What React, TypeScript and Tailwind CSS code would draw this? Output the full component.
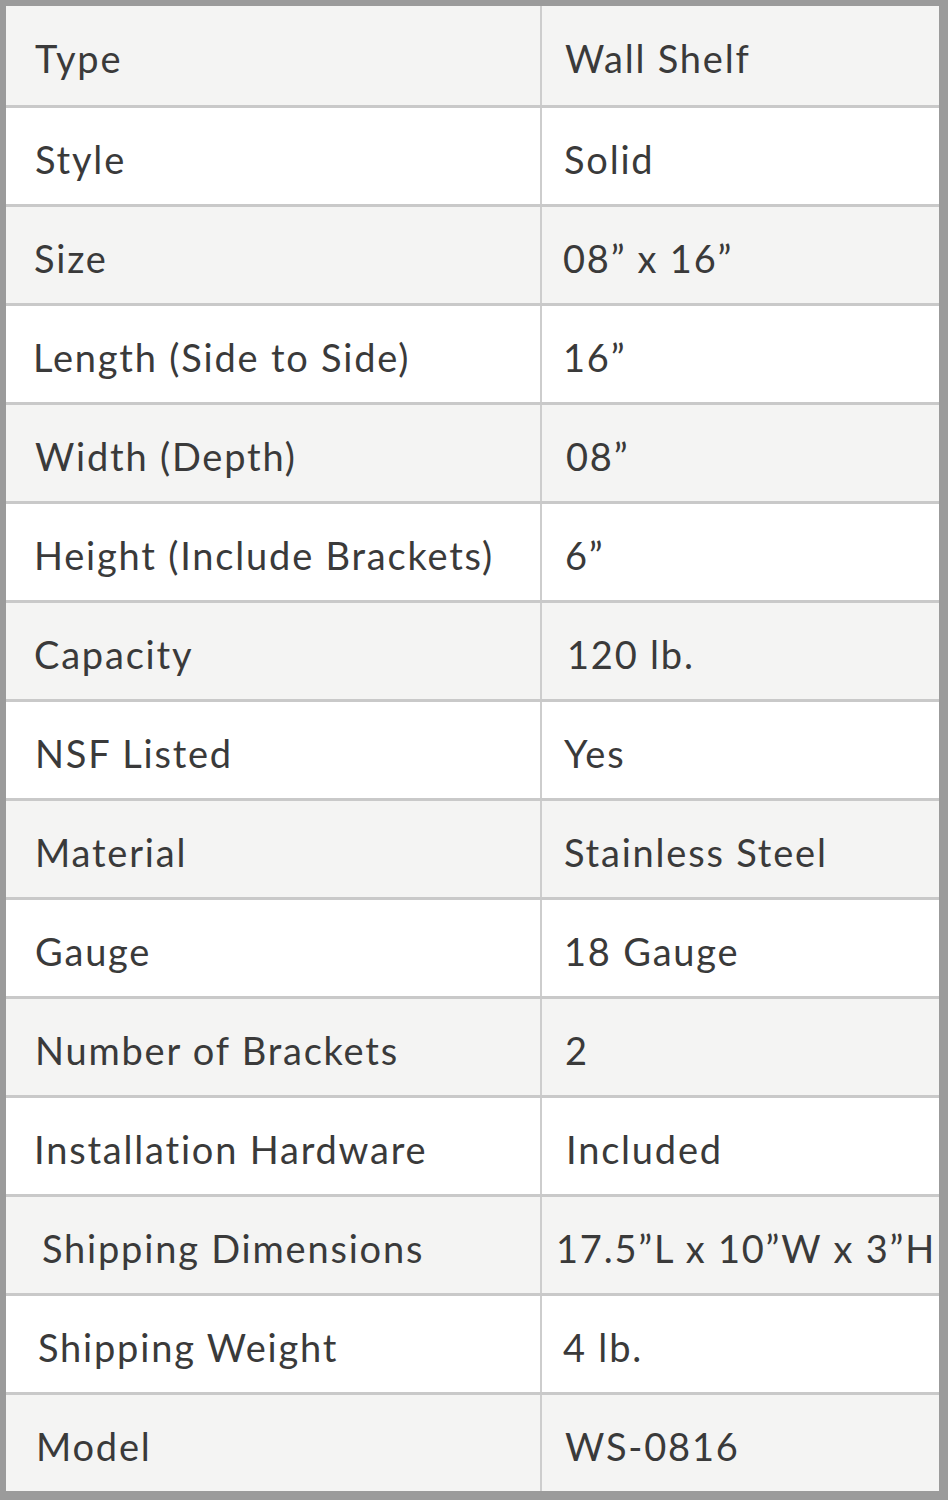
import React from "react";

const rows: { k: string; v: string }[] = [
  { k: "Type", v: "Wall Shelf" },
  { k: "Style", v: "Solid" },
  { k: "Size", v: "08” x 16”" },
  { k: "Length (Side to Side)", v: "16”" },
  { k: "Width (Depth)", v: "08”" },
  { k: "Height (Include Brackets)", v: "6”" },
  { k: "Capacity", v: "120 lb." },
  { k: "NSF Listed", v: "Yes" },
  { k: "Material", v: "Stainless Steel" },
  { k: "Gauge", v: "18 Gauge" },
  { k: "Number of Brackets", v: "2" },
  { k: "Installation Hardware", v: "Included" },
  { k: "Shipping Dimensions", v: "17.5”L x 10”W x 3”H" },
  { k: "Shipping Weight", v: "4 lb." },
  { k: "Model", v: "WS-0816" },
];

const kPad = [
  "pl-[29px]", "pl-[29px]", "pl-[28px]", "pl-[27px]", "pl-[29px]",
  "pl-[28px]", "pl-[28px]", "pl-[29px]", "pl-[29px]", "pl-[29px]",
  "pl-[29px]", "pl-[28px]", "pl-[36px]", "pl-[32px]", "pl-[30px]",
];
const vPad = [
  "pl-[23px]", "pl-[22px]", "pl-[21px]", "pl-[21px]", "pl-[24px]",
  "pl-[23px]", "pl-[25px]", "pl-[22px]", "pl-[22px]", "pl-[22px]",
  "pl-[23px]", "pl-[24px]", "pl-[14px]", "pl-[21px]", "pl-[23px]",
];

export default function App() {
  return (
    <div
      className="w-[948px] h-[1500px] bg-[#9b9b9b] pt-[6px] pl-[6px] pr-[9px] pb-[9px]"
      style={{ fontFamily: "Lato, 'Open Sans', sans-serif" }}
    >
      <div className="flex flex-col w-full h-full">
        {rows.map((r, i) => (
          <div
            key={i}
            className={
              "flex " +
              (i === 0 ? "h-[99px] " : "h-[99px] border-t-[3px] border-[#c9c9c9] ") +
              (i % 2 === 0 ? "bg-[#f4f4f3]" : "bg-white")
            }
          >
            <div
              className={
                "w-[536px] shrink-0 flex items-center pt-[6px] text-[38px] tracking-[1.8px] text-[#3a3a3a] border-r-[2px] border-[#cdcdcd] whitespace-nowrap " +
                kPad[i]
              }
            >
              {r.k}
            </div>
            <div
              className={
                "flex-1 flex items-center pt-[6px] text-[38px] tracking-[1.8px] text-[#3a3a3a] whitespace-nowrap " +
                vPad[i]
              }
            >
              {r.v}
            </div>
          </div>
        ))}
      </div>
    </div>
  );
}
